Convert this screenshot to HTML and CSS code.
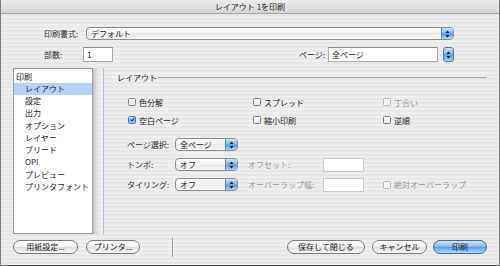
FILE: index.html
```html
<!DOCTYPE html>
<html lang="ja">
<head>
    <meta charset="UTF-8">
    <title>レイアウト 1を印刷</title>
    <link rel="stylesheet" href="styles.css">
</head>
<body>
    <div class="window">
        <div class="titlebar">レイアウト 1を印刷</div>

        <div class="head">
            <div class="row row-style">
                <span class="label label-style">印刷書式:</span>
                <div class="popup popup-wide">
                    <span class="popup-text">デフォルト</span>
                    <span class="popup-arrows"><svg width="5" height="8" viewBox="0 0 5 8"><path d="M2.5 0.5 L4.5 3 H0.5Z M0.5 5 H4.5 L2.5 7.5Z" fill="#1b1b1b"/></svg></span>
                </div>
            </div>
            <div class="row row-copies">
                <span class="label label-copies">部数:</span>
                <div class="field field-copies">1</div>
                <span class="label label-pages">ページ:</span>
                <div class="field field-pages">全ページ</div>
                <span class="stepper"><svg width="5" height="8" viewBox="0 0 5 8"><path d="M2.5 0.5 L4.5 3 H0.5Z M0.5 5 H4.5 L2.5 7.5Z" fill="#1b1b1b"/></svg></span>
            </div>
        </div>

        <div class="main">
            <ul class="list">
                <li class="list-group">印刷</li>
                <li class="selected">レイアウト</li>
                <li>設定</li>
                <li>出力</li>
                <li>オプション</li>
                <li>レイヤー</li>
                <li>ブリード</li>
                <li>OPI</li>
                <li>プレビュー</li>
                <li>プリンタフォント</li>
            </ul>
            <div class="list-shadow"></div>

            <div class="pane">
                <div class="pane-title">
                    <span>レイアウト</span>
                    <span class="pane-rule"></span>
                </div>

                <div class="checks">
                    <label class="check-item"><span class="check"></span>色分解</label>
                    <label class="check-item"><span class="check"></span>スプレッド</label>
                    <label class="check-item disabled"><span class="check"></span>丁合い</label>
                    <label class="check-item"><span class="check checked"><svg width="9" height="9" viewBox="0 0 9 9"><path d="M1.6 4.6 L3.6 7.2 L7.8 0.8" fill="none" stroke="#111" stroke-width="1.5"/></svg></span>空白ページ</label>
                    <label class="check-item"><span class="check"></span>縮小印刷</label>
                    <label class="check-item"><span class="check"></span>逆順</label>
                </div>

                <div class="options">
                    <span class="label">ページ選択:</span>
                    <div class="popup popup-small">
                        <span class="popup-text">全ページ</span>
                        <span class="popup-arrows"><svg width="5" height="8" viewBox="0 0 5 8"><path d="M2.5 0.5 L4.5 3 H0.5Z M0.5 5 H4.5 L2.5 7.5Z" fill="#1b1b1b"/></svg></span>
                    </div>
                    <span></span><span></span><span></span>

                    <span class="label">トンボ:</span>
                    <div class="popup popup-small">
                        <span class="popup-text">オフ</span>
                        <span class="popup-arrows"><svg width="5" height="8" viewBox="0 0 5 8"><path d="M2.5 0.5 L4.5 3 H0.5Z M0.5 5 H4.5 L2.5 7.5Z" fill="#1b1b1b"/></svg></span>
                    </div>
                    <span class="label disabled">オフセット:</span>
                    <div class="field field-small"></div>
                    <span></span>

                    <span class="label">タイリング:</span>
                    <div class="popup popup-small">
                        <span class="popup-text">オフ</span>
                        <span class="popup-arrows"><svg width="5" height="8" viewBox="0 0 5 8"><path d="M2.5 0.5 L4.5 3 H0.5Z M0.5 5 H4.5 L2.5 7.5Z" fill="#1b1b1b"/></svg></span>
                    </div>
                    <span class="label disabled">オーバーラップ幅:</span>
                    <div class="field field-small"></div>
                    <label class="check-item disabled"><span class="check"></span>絶対オーバーラップ</label>
                </div>
            </div>
        </div>

        <div class="footer">
            <button class="btn btn-paper">用紙設定...</button>
            <button class="btn btn-printer">プリンタ...</button>
            <span class="footer-sep"></span>
            <span class="footer-space"></span>
            <button class="btn btn-save">保存して閉じる</button>
            <button class="btn btn-cancel">キャンセル</button>
            <button class="btn btn-default">印刷</button>
        </div>
    </div>
</body>
</html>
```

FILE: styles.css
```css
* {
    box-sizing: border-box;
}
body {
    margin: 0;
    font-family: "Noto Sans CJK JP", "Liberation Sans", sans-serif;
    font-size: 8px;
    color: #1a1a1a;
    background-color: #e8e8e8;
}
.window {
    width: 500px;
    height: 266px;
    border-left: 1px solid #7a7a7a;
    border-right: 1px solid #7a7a7a;
    border-bottom: 1px solid #5a5a5a;
    background: repeating-linear-gradient(to bottom, #eeeeee 0, #eeeeee 2px, #e7e7e7 2px, #e7e7e7 4px);
}
.titlebar {
    height: 14px;
    line-height: 13px;
    text-align: center;
    color: #222;
    background: linear-gradient(#ececec, #d6d6d6);
    border-bottom: 1px solid #a2a2a2;
    border-top-left-radius: 3px;
    border-top-right-radius: 3px;
}
.head {
    padding-left: 43px;
    padding-right: 45px;
}
.row {
    display: flex;
    align-items: center;
}
.row-style {
    margin-top: 13px;
    height: 13px;
}
.row-copies {
    margin-top: 7px;
    height: 15px;
}
.label {
    color: #2a2a2a;
    white-space: nowrap;
}
.label.disabled {
    color: #9a9a9a;
}
.label-style {
    width: 42px;
}
.label-copies {
    width: 39px;
}
.label-pages {
    margin-left: auto;
    width: 29px;
}

/* popups */
.popup {
    display: flex;
    height: 13px;
    border: 1px solid #8b8b8b;
    border-radius: 4px;
    background: linear-gradient(#ffffff, #f1f1f1 50%, #e6e6e6 50%, #f7f7f7);
    overflow: hidden;
}
.popup-wide {
    width: 368px;
}
.popup-small {
    width: 63px;
}
.popup-text {
    flex: 1;
    padding-left: 4px;
    line-height: 11px;
    white-space: nowrap;
}
.popup-arrows,
.stepper {
    display: flex;
    align-items: center;
    justify-content: center;
    background: linear-gradient(#cfe4fb, #80b6ee 45%, #5a9ae6 55%, #a9d6fc);
}
.popup-arrows {
    width: 12px;
    border-left: 1px solid #5d86c2;
}
.stepper {
    width: 11px;
    height: 15px;
    margin-left: 5px;
    border: 1px solid #4f77b5;
    border-radius: 3px;
}

/* text fields */
.field {
    height: 15px;
    padding-left: 3px;
    line-height: 13px;
    background-color: #fff;
    border: 1px solid #a9a9a9;
    border-top-color: #8a8a8a;
}
.field-copies {
    width: 30px;
}
.field-pages {
    width: 110px;
}
.field-small {
    width: 41px;
    height: 14px;
    border-color: #cccccc;
}

/* main area */
.main {
    display: flex;
    height: 166px;
    margin-top: 6px;
}
.list {
    list-style: none;
    margin: 0 0 0 12px;
    padding: 1.5px 0 0 0;
    width: 80px;
    height: 166px;
    background-color: #fff;
    border: 1px solid #9b9b9b;
    overflow: hidden;
}
.list li {
    height: 12.25px;
    line-height: 12.25px;
    padding-left: 11px;
    white-space: nowrap;
}
.list .list-group {
    padding-left: 2px;
}
.list .selected {
    background-color: #b5d2fb;
}
.list-shadow {
    width: 7px;
    height: 166px;
    background: linear-gradient(to right, #c4c4c4, #dedede 60%, #ebebeb);
}
.pane {
    flex: 1;
    margin-left: 3px;
    padding: 3px 12px 0 13px;
    border-left: 1px solid #a9c1e3;
}
.pane-title {
    display: flex;
    align-items: center;
    height: 12px;
}
.pane-rule {
    flex: 1;
    height: 1px;
    margin-left: 1px;
    background-color: #a8a8a8;
}

/* checkboxes */
.checks {
    display: grid;
    grid-template-columns: 125px 130px 1fr;
    grid-auto-rows: 12px;
    row-gap: 6px;
    margin-top: 13px;
    padding-left: 11px;
}
.check-item {
    display: flex;
    align-items: center;
    white-space: nowrap;
}
.check-item.disabled {
    color: #9a9a9a;
}
.check {
    display: flex;
    align-items: center;
    justify-content: center;
    width: 8px;
    height: 8px;
    margin-right: 3px;
    border: 1px solid #7f7f7f;
    border-radius: 1.5px;
    background: linear-gradient(#ffffff, #e4e4e4);
}
.check-item.disabled .check {
    border-color: #b9b9b9;
    background: #f4f4f4;
}
.check.checked {
    border-color: #4f77b5;
    background: linear-gradient(#cfe4fb, #7bb2ee 50%, #5a9ae6 50%, #a9d6fc);
}
.check.checked svg {
    margin-top: -2px;
    margin-left: 1px;
}

/* option rows */
.options {
    display: grid;
    grid-template-columns: 48px 73px 75px 60px 1fr;
    grid-auto-rows: 14px;
    row-gap: 6px;
    align-items: center;
    margin-top: 11.5px;
    padding-left: 10px;
}
.options .check-item {
    padding-left: 0;
}

/* footer */
.footer {
    display: flex;
    align-items: center;
    height: 20px;
    margin-top: 3px;
    padding: 0 12px;
}
.btn {
    height: 14px;
    padding: 0;
    font-family: inherit;
    font-size: 8px;
    line-height: 12px;
    color: #1a1a1a;
    border: 1px solid #7a7a7a;
    border-radius: 7px;
    background: linear-gradient(#ffffff, #f0f0f0 50%, #dddddd 50%, #f6f6f6);
}
.btn-paper {
    width: 65px;
}
.btn-printer {
    width: 54px;
    margin-left: 8px;
}
.footer-sep {
    width: 1px;
    height: 19px;
    margin-left: 32px;
    background-color: #a0a0a0;
}
.footer-space {
    flex: 1;
}
.btn-save {
    width: 78px;
}
.btn-cancel {
    width: 55px;
    margin-left: 7px;
}
.btn-default {
    width: 54px;
    margin-left: 6px;
    border-color: #3f68a8;
    background: linear-gradient(#d2e6fc, #86baef 45%, #5d9de7 55%, #b2dcfd);
}
```
